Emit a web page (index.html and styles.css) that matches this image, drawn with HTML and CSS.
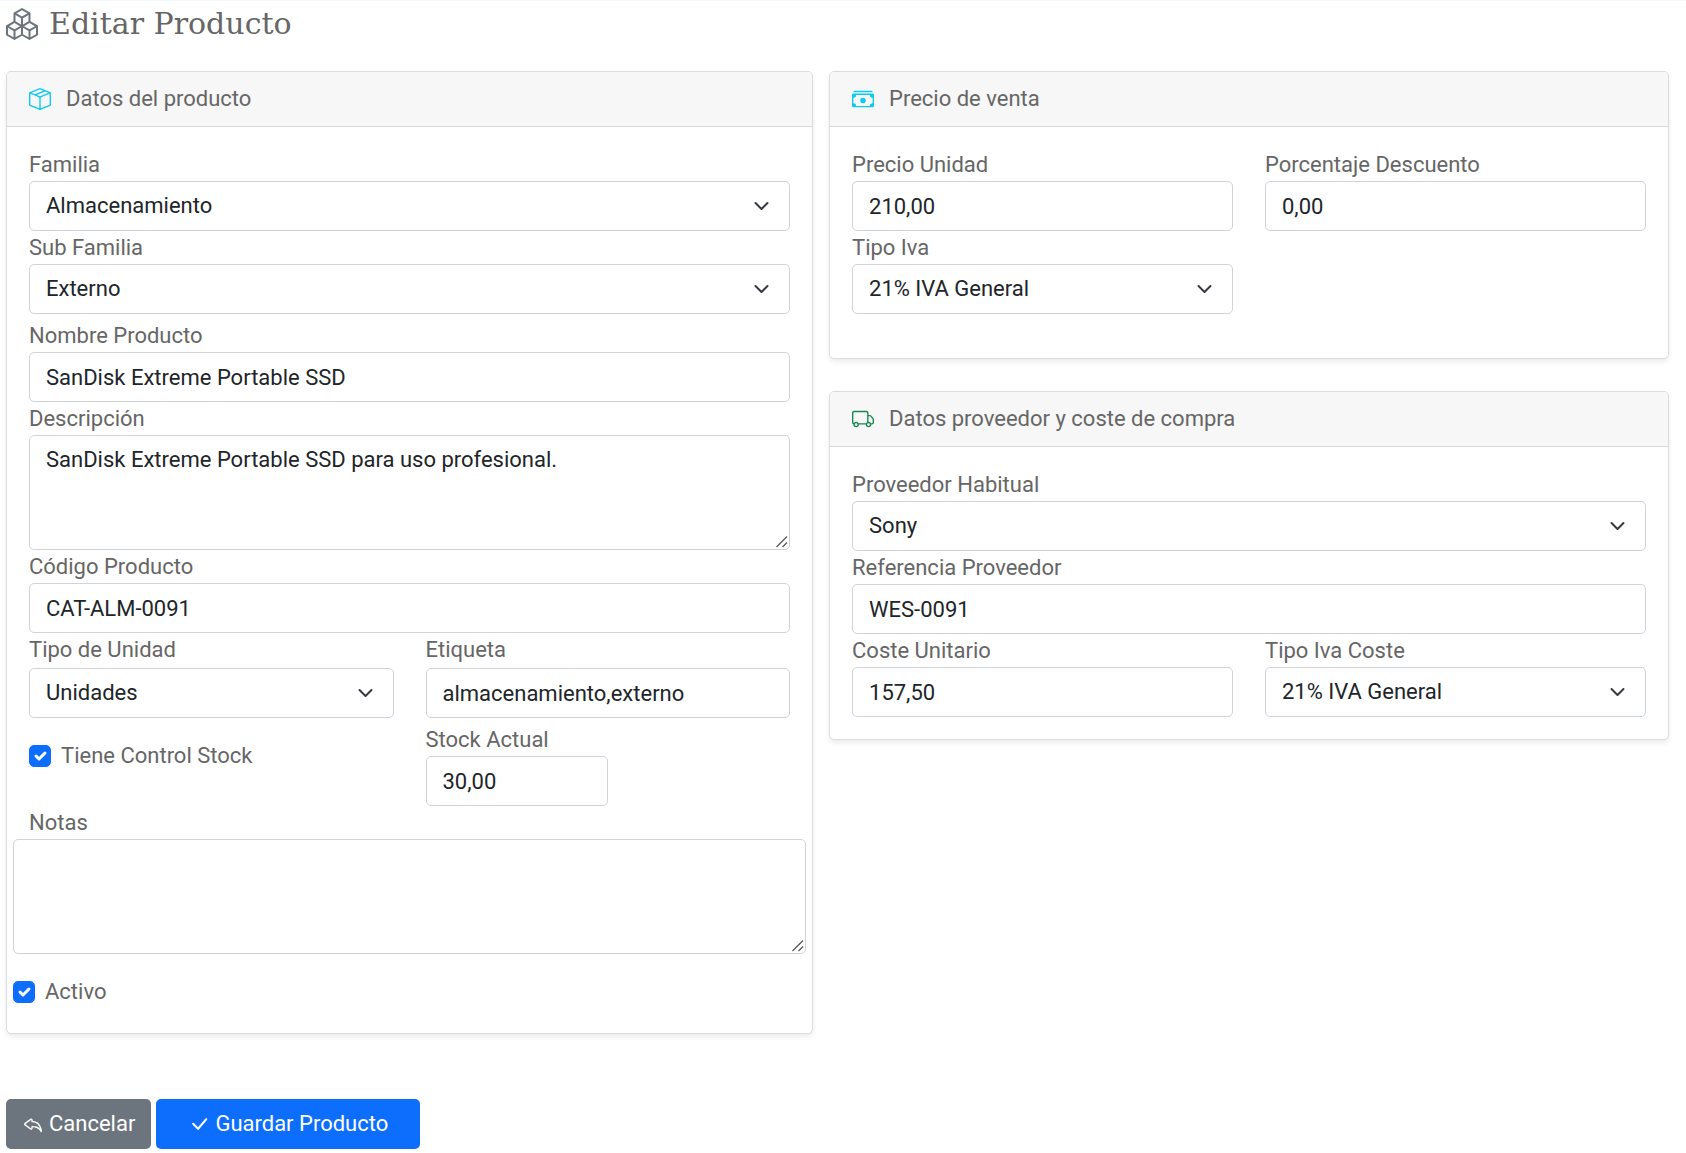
FILE: index.html
```html
<!DOCTYPE html>
<html lang="es">
<head>
<meta charset="utf-8">
<meta name="viewport" content="width=device-width, initial-scale=1">
<title>Editar Producto</title>
<link rel="stylesheet" href="styles.css">
</head>
<body>
<main class="page">
  <h1 class="page-title">
    <svg class="title-icon" viewBox="0 0 16 16" aria-hidden="true"><path d="M7.752.066a.5.5 0 0 1 .496 0l3.75 2.143a.5.5 0 0 1 .252.434v3.995l3.498 2A.5.5 0 0 1 16 9.07v4.286a.5.5 0 0 1-.252.434l-3.75 2.143a.5.5 0 0 1-.496 0l-3.502-2-3.502 2.001a.5.5 0 0 1-.496 0l-3.75-2.143A.5.5 0 0 1 0 13.357V9.071a.5.5 0 0 1 .252-.434L3.75 6.638V2.643a.5.5 0 0 1 .252-.434zM4.25 7.504 1.508 9.071l2.742 1.567 2.742-1.567zM7.5 9.933l-2.75 1.571v3.134l2.75-1.571zm1 3.134 2.75 1.571v-3.134L8.5 9.933zm.508-3.996 2.742 1.567 2.742-1.567-2.742-1.567zm2.242-2.433V3.504L8.5 5.076V8.21zM7.5 8.21V5.076L4.75 3.504v3.134zM5.258 2.643 8 4.21l2.742-1.567L8 1.076zM15 9.933l-2.75 1.571v3.134L15 13.067zM3.75 14.638v-3.134L1 9.933v3.134z"/></svg>
    Editar Producto
  </h1>

  <form class="product-form">
    <div class="columns">
      <section class="card">
        <h2 class="card-header">
          <svg class="icon icon-info" viewBox="0 0 16 16" aria-hidden="true"><path d="M8.186 1.113a.5.5 0 0 0-.372 0L1.846 3.5l2.404.961L10.404 2zm3.564 1.426L5.596 5 8 5.961 14.154 3.5zm3.25 1.7-6.5 2.6v7.922l6.5-2.6V4.24zM7.5 14.762V6.838L1 4.239v7.923zM7.443.184a1.5 1.5 0 0 1 1.114 0l7.129 2.852A.5.5 0 0 1 16 3.5v8.662a1 1 0 0 1-.629.928l-7.185 2.874a.5.5 0 0 1-.372 0L.63 13.09a1 1 0 0 1-.63-.928V3.5a.5.5 0 0 1 .314-.464z"/></svg>
          Datos del producto
        </h2>
        <div class="card-body">
          <div class="field">
            <label for="familia">Familia</label>
            <select class="control select" id="familia"><option>Almacenamiento</option></select>
          </div>
          <div class="field">
            <label for="subfamilia">Sub Familia</label>
            <select class="control select" id="subfamilia"><option>Externo</option></select>
          </div>
          <div class="field field-spaced">
            <label for="nombre">Nombre Producto</label>
            <input class="control" id="nombre" type="text" value="SanDisk Extreme Portable SSD">
          </div>
          <div class="field">
            <label for="descripcion">Descripción</label>
            <textarea class="control area" id="descripcion" rows="3">SanDisk Extreme Portable SSD para uso profesional.</textarea>
          </div>
          <div class="field">
            <label for="codigo">Código Producto</label>
            <input class="control" id="codigo" type="text" value="CAT-ALM-0091">
          </div>
          <div class="pair pair-loose">
            <div class="field">
              <label for="unidad">Tipo de Unidad</label>
              <select class="control select" id="unidad"><option>Unidades</option></select>
            </div>
            <div class="field">
              <label for="etiqueta">Etiqueta</label>
              <input class="control" id="etiqueta" type="text" value="almacenamiento,externo">
            </div>
          </div>
          <div class="pair field-spaced">
            <div class="check check-stock">
              <input class="checkbox" id="control-stock" type="checkbox" checked>
              <label for="control-stock">Tiene Control Stock</label>
            </div>
            <div class="field">
              <label for="stock">Stock Actual</label>
              <input class="control control-half" id="stock" type="text" value="30,00">
            </div>
          </div>
          <div class="field">
            <label for="notas">Notas</label>
            <div class="bleed"><textarea class="control area" id="notas" rows="3"></textarea></div>
          </div>
          <div class="bleed check check-active">
            <input class="checkbox" id="activo" type="checkbox" checked>
            <label for="activo">Activo</label>
          </div>
        </div>
      </section>

      <div class="stack">
        <section class="card">
          <h2 class="card-header">
            <svg class="icon icon-info" viewBox="0 0 16 16" aria-hidden="true"><path d="M1 3a1 1 0 0 1 1-1h12a1 1 0 0 1 1 1zm7 8a2 2 0 1 0 0-4 2 2 0 0 0 0 4"/><path d="M0 5a1 1 0 0 1 1-1h14a1 1 0 0 1 1 1v8a1 1 0 0 1-1 1H1a1 1 0 0 1-1-1zm3 0a2 2 0 0 1-2 2v4a2 2 0 0 1 2 2h10a2 2 0 0 1 2-2V7a2 2 0 0 1-2-2z"/></svg>
            Precio de venta
          </h2>
          <div class="card-body card-body-tall">
            <div class="pair">
              <div class="field">
                <label for="precio">Precio Unidad</label>
                <input class="control" id="precio" type="text" value="210,00">
              </div>
              <div class="field">
                <label for="descuento">Porcentaje Descuento</label>
                <input class="control" id="descuento" type="text" value="0,00">
              </div>
              <div class="field">
                <label for="iva">Tipo Iva</label>
                <select class="control select" id="iva"><option>21% IVA General</option></select>
              </div>
            </div>
          </div>
        </section>

        <section class="card">
          <h2 class="card-header">
            <svg class="icon icon-success" viewBox="0 0 16 16" aria-hidden="true"><path d="M0 3.5A1.5 1.5 0 0 1 1.5 2h9A1.5 1.5 0 0 1 12 3.5V5h1.02a1.5 1.5 0 0 1 1.17.563l1.481 1.85a1.5 1.5 0 0 1 .329.938V10.5a1.5 1.5 0 0 1-1.5 1.5H14a2 2 0 1 1-4 0H5a2 2 0 1 1-3.998-.085A1.5 1.5 0 0 1 0 10.5zm1.294 7.456A2 2 0 0 1 4.732 11h5.536a2 2 0 0 1 .732-.732V3.5a.5.5 0 0 0-.5-.5h-9a.5.5 0 0 0-.5.5v7a.5.5 0 0 0 .294.456M12 10a2 2 0 0 1 1.732 1h.768a.5.5 0 0 0 .5-.5V8.35a.5.5 0 0 0-.11-.312l-1.48-1.85A.5.5 0 0 0 13.02 6H12zm-9 1a1 1 0 1 0 0 2 1 1 0 0 0 0-2m9 0a1 1 0 1 0 0 2 1 1 0 0 0 0-2"/></svg>
            Datos proveedor y coste de compra
          </h2>
          <div class="card-body">
            <div class="field">
              <label for="proveedor">Proveedor Habitual</label>
              <select class="control select" id="proveedor"><option>Sony</option></select>
            </div>
            <div class="field">
              <label for="referencia">Referencia Proveedor</label>
              <input class="control" id="referencia" type="text" value="WES-0091">
            </div>
            <div class="pair">
              <div class="field">
                <label for="coste">Coste Unitario</label>
                <input class="control" id="coste" type="text" value="157,50">
              </div>
              <div class="field">
                <label for="iva-coste">Tipo Iva Coste</label>
                <select class="control select" id="iva-coste"><option>21% IVA General</option></select>
              </div>
            </div>
          </div>
        </section>
      </div>
    </div>

    <div class="actions">
      <button class="btn btn-secondary" type="button">
        <svg class="btn-icon" viewBox="0 0 16 16" aria-hidden="true"><path d="M6.598 5.013a.144.144 0 0 1 .202.134V6.3a.5.5 0 0 0 .5.5c.667 0 2.013.005 3.3.822.984.624 1.99 1.76 2.595 3.876-1.02-.983-2.185-1.516-3.205-1.799a8.7 8.7 0 0 0-1.921-.306 7 7 0 0 0-.798.008h-.013l-.005.001h-.001L7.3 9.9l-.05-.498a.5.5 0 0 0-.45.498v1.153c0 .108-.11.176-.202.134L2.614 8.254l-.042-.028a.147.147 0 0 1 0-.252l.042-.028zM7.8 10.386q.103 0 .223.006c.434.02 1.034.086 1.7.271 1.326.368 2.896 1.202 3.94 3.08a.5.5 0 0 0 .933-.305c-.464-3.71-1.886-5.662-3.46-6.66-1.245-.79-2.527-.942-3.336-.971v-.66a1.144 1.144 0 0 0-1.767-.96l-3.994 2.94a1.147 1.147 0 0 0 0 1.946l3.994 2.94a1.144 1.144 0 0 0 1.767-.96z"/></svg>
        Cancelar
      </button>
      <button class="btn btn-primary" type="submit">
        <svg class="btn-icon" viewBox="0 0 16 16" aria-hidden="true"><path d="M12.736 3.97a.733.733 0 0 1 1.047 0c.286.289.29.756.01 1.05L7.88 12.01a.733.733 0 0 1-1.065.02L3.217 8.384a.757.757 0 0 1 0-1.06.733.733 0 0 1 1.047 0l3.052 3.093 5.4-6.425z"/></svg>
        Guardar Producto
      </button>
    </div>
  </form>
</main>
</body>
</html>
```
FILE: styles.css
```css
*,
*::before,
*::after {
  box-sizing: border-box;
}

body {
  margin: 0;
  border-top: 1px solid #f3f7fe;
  background: #fff;
  color: #666;
  font-family: Roboto, "Liberation Sans", sans-serif;
  font-size: 22px;
  line-height: 32px;
}

.page {
  padding: 6px 17px 4px 6px;
}

.page-title {
  display: flex;
  align-items: center;
  gap: 11px;
  margin: 0 0 30px;
  font-family: "DejaVu Serif", serif;
  font-size: 30px;
  font-weight: 400;
  line-height: 34px;
}

.title-icon {
  width: 32px;
  height: 32px;
  fill: #6c757d;
}

.columns {
  display: grid;
  grid-template-columns: minmax(0, 49fr) minmax(0, 51fr);
  gap: 16px;
  align-items: start;
}

.stack {
  display: grid;
  gap: 32px;
}

.card {
  border: 1px solid #dcdcdc;
  border-radius: 5px;
  background: #fff;
  box-shadow: 0 3px 5px rgba(0, 0, 0, 0.075);
}

.card-header {
  display: flex;
  align-items: center;
  gap: 15px;
  height: 55px;
  margin: 0;
  padding: 0 22px;
  border-bottom: 1px solid #d8d8d8;
  border-radius: 4px 4px 0 0;
  background: #f7f7f7;
  font-size: 22px;
  font-weight: 400;
}

.icon {
  width: 22px;
  height: 22px;
}

.icon-info {
  fill: #0dcaf0;
}

.icon-success {
  fill: #198754;
}

.card-body {
  padding: 21px 22px 22px;
}

.card-body-tall {
  padding-bottom: 44px;
}

.field label {
  display: block;
  line-height: 33px;
}

.field-spaced {
  margin-top: 5px;
}

.pair {
  display: grid;
  grid-template-columns: repeat(2, minmax(0, 1fr));
  column-gap: 32px;
}

.pair-loose label {
  margin-bottom: 2px;
}

.control {
  display: block;
  width: 100%;
  height: 50px;
  margin: 0;
  padding: 8px 16px;
  border: 1px solid #ced4da;
  border-radius: 5px;
  background-color: #fff;
  color: #212529;
  font: inherit;
  line-height: 32px;
}

.control-half {
  width: 50%;
}

.select {
  padding-right: 48px;
  appearance: none;
  background-image: url("data:image/svg+xml,%3Csvg xmlns='http://www.w3.org/2000/svg' viewBox='0 0 16 16'%3E%3Cpath fill='none' stroke='%23343a40' stroke-linecap='round' stroke-linejoin='round' stroke-width='2' d='m2 5 6 6 6-6'/%3E%3C/svg%3E");
  background-position: right 17px center;
  background-repeat: no-repeat;
  background-size: 21px 16px;
}

.area {
  height: 115px;
  resize: vertical;
}

.area::-webkit-resizer {
  background: url("data:image/svg+xml,%3Csvg xmlns='http://www.w3.org/2000/svg' viewBox='0 0 15 15'%3E%3Cpath fill='none' stroke='%23555' stroke-width='1.2' d='M2.5 13 13 2.5M8.5 13 13 8.5'/%3E%3C/svg%3E") center / contain no-repeat;
}

.bleed {
  margin-right: -16px;
  margin-left: -16px;
}

.check {
  display: flex;
  align-items: center;
  gap: 10px;
  height: 32px;
}

.check-stock {
  margin-top: 17px;
}

.check-active {
  margin-top: 22px;
  margin-bottom: 3px;
}

.checkbox {
  width: 22px;
  height: 22px;
  margin: 0;
  border: 1px solid #ced4da;
  border-radius: 5px;
  appearance: none;
}

.checkbox:checked {
  border-color: #0d6efd;
  background: #0d6efd url("data:image/svg+xml,%3Csvg xmlns='http://www.w3.org/2000/svg' viewBox='0 0 20 20'%3E%3Cpath fill='none' stroke='%23fff' stroke-linecap='round' stroke-linejoin='round' stroke-width='3' d='m6 10 3 3 6-6'/%3E%3C/svg%3E") center / contain no-repeat;
}

.actions {
  display: flex;
  gap: 5px;
  margin-top: 65px;
}

.btn {
  display: flex;
  align-items: center;
  gap: 5px;
  height: 50px;
  padding: 0 16px;
  border: 0;
  border-radius: 5px;
  color: #fff;
  font: inherit;
}

.btn-secondary {
  background: #6c757d;
}

.btn-primary {
  padding: 0 32px;
  background: #0d6efd;
}

.btn-icon {
  width: 22px;
  height: 22px;
  fill: currentColor;
}
```
